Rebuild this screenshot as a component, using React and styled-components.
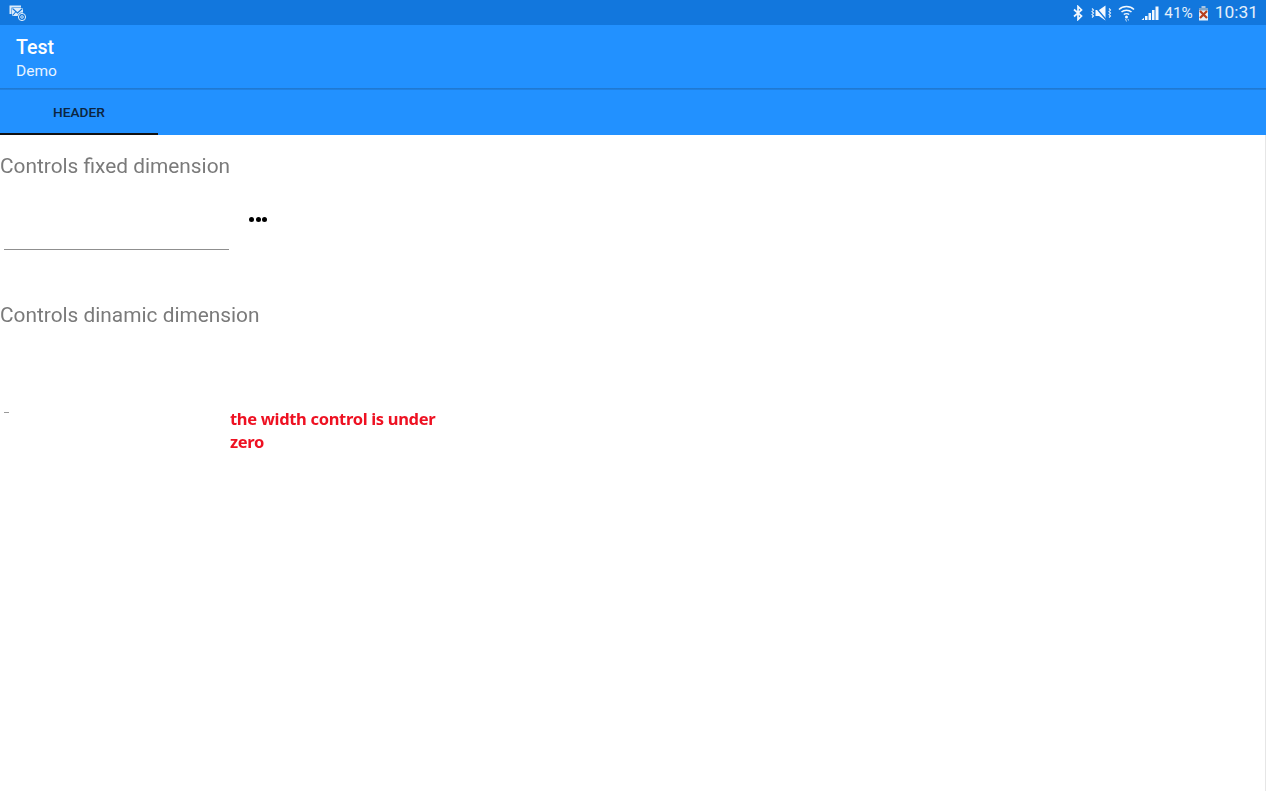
import React from "react";
import styled, { createGlobalStyle } from "styled-components";

const Global = createGlobalStyle`
  html, body { margin: 0; padding: 0; background: #fff; }
  body { font-family: Roboto, "Liberation Sans", sans-serif; }
`;

const Screen = styled.div`
  width: 1266px;
  height: 791px;
  overflow: hidden;
  display: flex;
  flex-direction: column;
  background: #fff;
`;

const StatusBar = styled.div`
  height: 25px;
  flex: none;
  background: #1277dd;
  display: flex;
  align-items: center;
  justify-content: space-between;
  padding: 0 8px 0 9px;
  color: #e4f0fb;
  box-sizing: border-box;
`;

const StatusGroup = styled.div`
  display: flex;
  align-items: center;
`;

const StatusIcon = styled.svg`
  display: block;
  flex: none;
  margin-right: ${(p) => p.$gap ?? 0}px;
`;

const Percent = styled.span`
  font-size: 15.3px;
  line-height: 26px;
  margin-right: 5px;
`;

const Clock = styled.span`
  font-size: 17.4px;
  line-height: 27px;
`;

const AppBar = styled.header`
  height: 65px;
  flex: none;
  box-sizing: border-box;
  background: linear-gradient(#2291ff 0 63px, #1f76cc 63px, #2084e8 65px);
  padding: 11px 16px 0;
  color: #fff;
`;

const Title = styled.div`
  font-size: 19.5px;
  font-weight: 500;
  line-height: 23px;
`;

const Subtitle = styled.div`
  font-size: 15.5px;
  line-height: 24px;
  color: #e9f4ff;
`;

const TabBar = styled.nav`
  height: 45px;
  flex: none;
  box-sizing: border-box;
  background: #2291ff;
  display: flex;
`;

const Tab = styled.div`
  width: 158px;
  box-sizing: border-box;
  border-bottom: 2px solid #111;
  display: flex;
  align-items: center;
  justify-content: center;
  font-size: 13.7px;
  font-weight: 500;
  color: #0c2540;
`;

const Content = styled.main`
  flex: 1;
  border-right: 1px solid #e6e6e6;
  display: flex;
  flex-direction: column;
`;

const SectionTitle = styled.h2`
  margin: ${(p) => p.$top}px 0 0;
  font-size: 20.85px;
  font-weight: 400;
  line-height: 24px;
  color: #7a7a7a;
  will-change: transform;
`;

const FixedRow = styled.div`
  display: flex;
  margin-top: 19px;
  height: 53px;
`;

const Field = styled.div`
  width: 225px;
  height: 100%;
  margin-left: 4px;
  box-sizing: border-box;
  border-bottom: 1px solid #8f8f8f;
`;

const Dots = styled.div`
  display: flex;
  gap: 1.5px;
  margin: 20px 0 0 20px;
  height: 5px;
`;

const Dot = styled.span`
  width: 5px;
  height: 5px;
  border-radius: 50%;
  background: #000;
`;

const DynamicRow = styled.div`
  display: flex;
  align-items: flex-start;
  margin-top: 80px;
`;

const Stub = styled.div`
  width: 5px;
  height: 1px;
  background: #999;
  margin: 5px 0 0 4px;
`;

const Note = styled.div`
  width: 222px;
  margin: 0 0 0 221px;
  font-family: "Noto Sans", "Open Sans", sans-serif;
  font-size: 16.5px;
  font-weight: 700;
  line-height: 23px;
  letter-spacing: -0.32px;
  color: #ee1122;
  will-change: transform;
`;

const MailIcon = () => (
  <StatusIcon width="18" height="18" viewBox="0 0 18 18" fill="none">
    <path d="M0.5 1.5H12V3.5H2.5V10H0.5Z" fill="#dcebfa" />
    <rect x="3" y="4" width="11" height="8" fill="#dcebfa" />
    <path d="M3.5 4.5L8.5 9L13.5 4.5M3.5 11.5L7 7.5" stroke="#1277dd" strokeWidth="1.1" />
    <circle cx="13" cy="13" r="4.5" fill="#1277dd" />
    <circle cx="13" cy="13" r="3.6" stroke="#e4f0fb" strokeWidth="1" />
    <circle cx="13" cy="13" r="1.3" stroke="#e4f0fb" strokeWidth="0.9" />
  </StatusIcon>
);

const BluetoothIcon = () => (
  <StatusIcon $gap={6} width="12" height="16" viewBox="0 0 12 16" fill="none">
    <path d="M2 4.5L9.5 11L6 14.5V1.5L9.5 5L2 11.5" stroke="#f2f8fe" strokeWidth="1.7" />
  </StatusIcon>
);

const MutedIcon = () => (
  <StatusIcon $gap={5} width="23" height="16" viewBox="0 0 22 16" fill="none">
    <path d="M1.5 3.5L3 5L1.5 6.5L3 8L1.5 9.5L3 11L1.5 12.5" stroke="#e4f0fb" strokeWidth="1.1" />
    <path d="M5 5H8.5L15 0.5V15.5L8.5 11H5Z" fill="#f4f9fe" />
    <path d="M4 1L16 15" stroke="#1277dd" strokeWidth="1.3" />
    <path d="M18.5 3.5L20 5L18.5 6.5L20 8L18.5 9.5L20 11L18.5 12.5" stroke="#e4f0fb" strokeWidth="1.1" />
  </StatusIcon>
);

const WifiIcon = () => (
  <StatusIcon $gap={6} width="17" height="18" viewBox="0 0 17 18" fill="none">
    <path d="M1 5.5C5 1.5 12 1.5 16 5.5" stroke="#f2f8fe" strokeWidth="1.5" />
    <path d="M3.5 8C6 5.6 11 5.6 13.5 8" stroke="#f2f8fe" strokeWidth="1.5" />
    <path d="M5.8 10.5C7.2 9.4 9.8 9.4 11.2 10.5" stroke="#f2f8fe" strokeWidth="1.5" />
    <circle cx="8.5" cy="13" r="1.5" fill="#f2f8fe" />
    <path d="M7.5 15L8.5 17.5M10 15L10.5 16.5" stroke="#b9d8f6" strokeWidth="1" />
  </StatusIcon>
);

const SignalIcon = () => (
  <StatusIcon $gap={5} width="18" height="16" viewBox="0 0 18 16" fill="#f2f8fe">
    <path d="M0.5 15L3 12.8V15Z" />
    <rect x="4" y="11" width="2.5" height="4" />
    <rect x="7.5" y="8" width="2.5" height="7" />
    <rect x="11" y="5" width="2.5" height="10" />
    <rect x="14.5" y="1.5" width="3" height="13.5" />
  </StatusIcon>
);

const BatteryIcon = () => (
  <StatusIcon $gap={6} width="11" height="16" viewBox="0 0 11 16" fill="none">
    <rect x="3.5" y="1" width="4" height="2" fill="#a9c6e4" />
    <rect x="1" y="3" width="9" height="12.5" fill="#e8f1fa" />
    <rect x="1" y="3" width="9" height="2.5" fill="#7fa6cc" />
    <path d="M2 6L9 13M9 6L2 13" stroke="#b8401f" strokeWidth="2.2" />
  </StatusIcon>
);

export default function App() {
  return (
    <>
      <Global />
      <Screen>
        <StatusBar>
          <StatusGroup>
            <MailIcon />
          </StatusGroup>
          <StatusGroup>
            <BluetoothIcon />
            <MutedIcon />
            <WifiIcon />
            <SignalIcon />
            <Percent>41%</Percent>
            <BatteryIcon />
            <Clock>10:31</Clock>
          </StatusGroup>
        </StatusBar>
        <AppBar>
          <Title>Test</Title>
          <Subtitle>Demo</Subtitle>
        </AppBar>
        <TabBar>
          <Tab>HEADER</Tab>
        </TabBar>
        <Content>
          <SectionTitle $top={19}>Controls fixed dimension</SectionTitle>
          <FixedRow>
            <Field />
            <Dots>
              <Dot />
              <Dot />
              <Dot />
            </Dots>
          </FixedRow>
          <SectionTitle $top={53}>Controls dinamic dimension</SectionTitle>
          <DynamicRow>
            <Stub />
            <Note>the width control is under zero</Note>
          </DynamicRow>
        </Content>
      </Screen>
    </>
  );
}
